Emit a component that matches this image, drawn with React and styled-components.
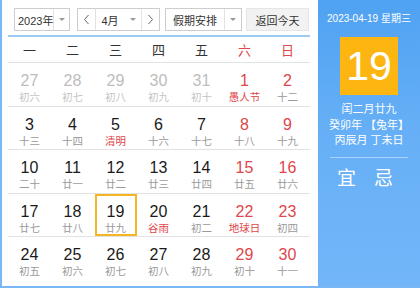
import React from "react";
import styled, { createGlobalStyle, css } from "styled-components";

const Global = createGlobalStyle`
  html, body { margin: 0; padding: 0; background: #fff; }
  body { font-family: "Liberation Sans", "Noto Sans CJK SC", sans-serif; }
  * { box-sizing: border-box; }
`;

const Frame = styled.div`
  width: 420px;
  height: 288px;
  display: flex;
  border-left: 2px solid #78b8f6;
  border-bottom: 2px solid #78b8f6;
  overflow: hidden;
`;

const Main = styled.div`
  width: 316px;
  flex: none;
  background: #fff;
  padding: 8px 8px 0 6px;
  display: flex;
  flex-direction: column;
`;

const Toolbar = styled.div`
  display: flex;
  align-items: center;
  height: 23px;
  padding-left: 6px;
  gap: 7px;
`;

const Box = styled.div`
  height: 23px;
  display: flex;
  align-items: stretch;
  border: 1px solid #cdcdcd;
  background: #fff;
  font-size: 11px;
  color: #333;
  white-space: nowrap;
  width: ${(p) => p.$w}px;
  margin-left: ${(p) => p.$ml || 0}px;
`;

const Label = styled.div`
  flex: 1;
  display: flex;
  align-items: center;
  justify-content: ${(p) => (p.$center ? "center" : "flex-start")};
  padding-left: ${(p) => (p.$center ? 0 : 3)}px;
`;

const ArrowCell = styled.div`
  width: 17px;
  flex: none;
  border-left: 1px solid ${(p) => (p.$plain ? "transparent" : "#e3e3e3")};
  display: flex;
  align-items: center;
  justify-content: center;
  &::after {
    content: "";
    border-left: 3px solid transparent;
    border-right: 3px solid transparent;
    border-top: 3px solid #999;
  }
`;

const NavCell = styled.div`
  width: 18px;
  flex: none;
  display: flex;
  align-items: center;
  justify-content: center;
  ${(p) =>
    p.$side === "left"
      ? css`border-right: 1px solid #e3e3e3;`
      : css`border-left: 1px solid #e3e3e3;`}
`;

const TodayButton = styled.div`
  height: 23px;
  width: 63px;
  margin-left: -3px;
  display: flex;
  align-items: center;
  justify-content: center;
  background: #f2f2f2;
  border: 1px solid #e6e6e6;
  font-size: 11px;
  color: #333;
  white-space: nowrap;
`;

const BlueLine = styled.div`
  height: 2px;
  background: #9ccbf3;
  margin-top: 4px;
`;

const Header = styled.div`
  display: grid;
  grid-template-columns: repeat(7, 43px);
  height: 25px;
  align-items: center;
`;

const WeekName = styled.div`
  text-align: center;
  font-size: 13px;
  color: ${(p) => (p.$red ? "#e0464b" : "#333")};
`;

const Week = styled.div`
  display: grid;
  grid-template-columns: repeat(7, 43px);
  height: 43.5px;
  border-top: 1px solid #e2e2e2;
`;

const Cell = styled.div`
  display: flex;
  align-items: center;
  justify-content: center;
`;

const Day = styled.div`
  width: 42px;
  height: 42px;
  display: flex;
  flex-direction: column;
  align-items: center;
  padding-top: 7px;
  border: 2px solid ${(p) => (p.$sel ? "#f5b623" : "transparent")};
`;

const Num = styled.div`
  font-size: 16px;
  line-height: 18px;
  color: ${(p) => (p.$dim ? "#bdbdbd" : p.$red ? "#e0464b" : "#1a1a1a")};
`;

const Lunar = styled.div`
  font-size: 10.5px;
  line-height: 14px;
  color: ${(p) => (p.$dim ? "#c4c4c4" : p.$red ? "#e0464b" : "#9a9a9a")};
`;

const Side = styled.div`
  flex: 1;
  background: linear-gradient(to bottom, #4fa2f2 0%, #66aff6 45%, #72b6f9 100%);
  color: #fff;
  display: flex;
  flex-direction: column;
  align-items: center;
`;

const DateLine = styled.div`
  margin-top: 12px;
  font-size: 10px;
  line-height: 14px;
  white-space: nowrap;
`;

const BigDay = styled.div`
  margin-top: 11px;
  width: 58px;
  height: 58px;
  background: #fdb512;
  display: flex;
  align-items: center;
  justify-content: center;
  font-size: 41px;
  line-height: 1;
`;

const Info = styled.div`
  margin-top: 7px;
  font-size: 11px;
  line-height: 15.5px;
  text-align: center;
  white-space: nowrap;
`;

const SideRule = styled.div`
  margin-top: 8px;
  width: 78px;
  height: 1px;
  background: rgba(255, 255, 255, 0.45);
`;

const YiJi = styled.div`
  margin-top: 10px;
  display: flex;
  gap: 18px;
  font-size: 19px;
  line-height: 22px;
  margin-left: -8px;
`;

const Chevron = ({ dir }) => (
  <svg width="7" height="11" viewBox="0 0 7 11">
    <path
      d={dir === "left" ? "M5.5 1 L1.5 5.5 L5.5 10" : "M1.5 1 L5.5 5.5 L1.5 10"}
      fill="none"
      stroke="#666"
      strokeWidth="1"
    />
  </svg>
);

const weeks = [
  [["27", "初六", 1], ["28", "初七", 1], ["29", "初八", 1], ["30", "初九", 1], ["31", "初十", 1], ["1", "愚人节", 0, 1], ["2", "十二"]],
  [["3", "十三"], ["4", "十四"], ["5", "清明", 0, 1], ["6", "十六"], ["7", "十七"], ["8", "十八"], ["9", "十九"]],
  [["10", "二十"], ["11", "廿一"], ["12", "廿二"], ["13", "廿三"], ["14", "廿四"], ["15", "廿五"], ["16", "廿六"]],
  [["17", "廿七"], ["18", "廿八"], ["19", "廿九"], ["20", "谷雨", 0, 1], ["21", "初二"], ["22", "地球日", 0, 1], ["23", "初四"]],
  [["24", "初五"], ["25", "初六"], ["26", "初七"], ["27", "初八"], ["28", "初九"], ["29", "初十"], ["30", "十一"]],
];

const names = ["一", "二", "三", "四", "五", "六", "日"];

export default function App() {
  return (
    <>
      <Global />
      <Frame>
        <Main>
          <Toolbar>
            <Box $w={56}>
              <Label>2023年</Label>
              <ArrowCell />
            </Box>
            <Box $w={83}>
              <NavCell $side="left"><Chevron dir="left" /></NavCell>
              <Label $center>4月</Label>
              <ArrowCell $plain />
              <NavCell $side="right"><Chevron dir="right" /></NavCell>
            </Box>
            <Box $w={77} $ml={-2}>
              <Label $center>假期安排</Label>
              <ArrowCell />
            </Box>
            <TodayButton>返回今天</TodayButton>
          </Toolbar>
          <BlueLine />
          <Header>
            {names.map((n, i) => (
              <WeekName key={n} $red={i >= 5}>{n}</WeekName>
            ))}
          </Header>
          {weeks.map((w, wi) => (
            <Week key={wi}>
              {w.map(([d, l, dim, festRed], i) => (
                <Cell key={i}>
                  <Day $sel={wi === 3 && d === "19"}>
                    <Num $dim={dim} $red={i >= 5}>{d}</Num>
                    <Lunar $dim={dim} $red={festRed}>{l}</Lunar>
                  </Day>
                </Cell>
              ))}
            </Week>
          ))}
        </Main>
        <Side>
          <DateLine>2023-04-19 星期三</DateLine>
          <BigDay>19</BigDay>
          <Info>
            闰二月廿九
            <br />
            癸卯年 【兔年】
            <br />
            丙辰月 丁未日
          </Info>
          <SideRule />
          <YiJi>
            <span>宜</span>
            <span>忌</span>
          </YiJi>
        </Side>
      </Frame>
    </>
  );
}
